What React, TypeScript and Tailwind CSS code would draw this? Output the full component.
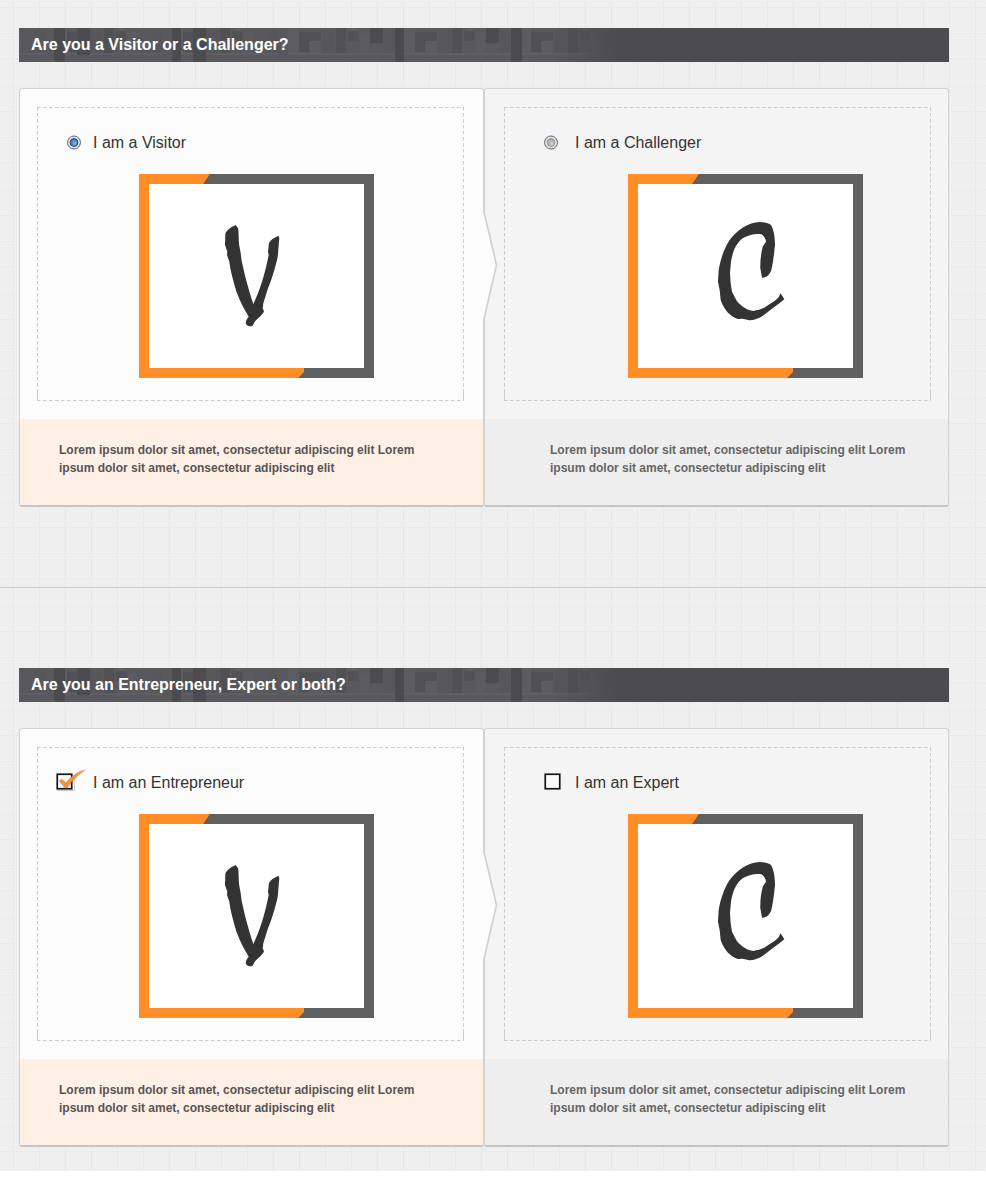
import React from "react";

type Kind = "radio" | "check";

function Texture() {
  return (
    <svg className="absolute inset-0 h-full w-full" aria-hidden="true">
      <defs>
        <pattern id="weave" width="26" height="26" patternUnits="userSpaceOnUse">
          <rect width="26" height="26" fill="#f1f1f1" />
          {Array.from({ length: 13 }, (_, r) =>
            Array.from({ length: 13 }, (_, c) => (
              <rect key={`${r}-${c}`} x={c * 2} y={r * 2 + 1} width="1" height="1" fill="#eaeaea" />
            ))
          )}
          <path d="M13.5 0V26M0 7.5H26" stroke="#eaeaea" strokeWidth="1" />
        </pattern>
      </defs>
      <rect width="100%" height="100%" fill="url(#weave)" />
    </svg>
  );
}

function HeaderPattern({ id }: { id: string }) {
  return (
    <svg className="absolute inset-0" width="930" height="34" aria-hidden="true">
      <defs>
        <pattern id={`${id}-tile`} x="3" width="116" height="34" patternUnits="userSpaceOnUse">
          <rect width="116" height="34" fill="#59595d" />
          <rect x="14" y="2" width="10" height="23" fill="#57575b" />
          <rect x="34" y="0" width="11" height="26" fill="#5d5d61" />
          <rect x="45" y="4" width="10" height="20" fill="#515155" />
          <rect x="55" y="4" width="12" height="9" fill="#525256" />
          <rect x="56" y="13" width="11" height="12" fill="#5d5d61" />
          <rect x="68" y="2" width="12" height="23" fill="#57575b" />
          <rect x="82" y="0" width="10" height="25" fill="#515155" />
          <rect x="94" y="3" width="10" height="10" fill="#525256" />
          <rect x="106" y="5" width="9" height="20" fill="#5c5c60" />
          <rect x="97" y="0" width="6" height="3" fill="#5f5f63" />
          <path d="M0 26H24M34 26H116" stroke="#5f5f63" strokeWidth="2" />
        </pattern>
        <linearGradient id={`${id}-fade`}>
          <stop offset="0" stopColor="#4c4c50" stopOpacity="0" />
          <stop offset="1" stopColor="#4c4c50" />
        </linearGradient>
      </defs>
      <rect width="930" height="34" fill="#4c4c50" />
      <rect width="600" height="34" fill={`url(#${id}-tile)`} />
      <rect x="35" width="11" height="34" fill="#4c4c50" />
      <rect x="58" width="13" height="27" fill="#4c4c50" />
      <rect x="153" width="9" height="34" fill="#4c4c50" />
      <rect x="174" width="13" height="34" fill="#4c4c50" />
      <rect x="351" width="13" height="15" fill="#4c4c50" />
      <rect x="376" width="9" height="34" fill="#4b4b4e" />
      <rect x="467" width="13" height="15" fill="#4c4c50" />
      <rect x="492" width="11" height="34" fill="#4b4b4e" />
      <rect x="530" width="70" height="34" fill={`url(#${id}-fade)`} />
    </svg>
  );
}

function DashedFrame() {
  return (
    <svg className="absolute inset-0" width="427" height="294" aria-hidden="true" fill="none" stroke="#d3cac3">
      <path d="M0 .5H427M0 293.5H427M.5 0V294M426.5 0V294" strokeDasharray="3.6 2.4" />
      <path d="M.5 284V294M426.5 284V294" />
    </svg>
  );
}

function Radio({ on }: { on: boolean }) {
  const id = on ? "radio-on" : "radio-off";
  return (
    <svg width="16" height="16" viewBox="0 0 16 16" aria-hidden="true">
      <defs>
        <radialGradient id={id} cx=".6" cy=".65">
          <stop offset="0" stopColor={on ? "#82b8ed" : "#d2d2d2"} />
          <stop offset="1" stopColor={on ? "#477dc0" : "#aaaaad"} />
        </radialGradient>
      </defs>
      <circle cx="8" cy="7.500" r="6.5" fill="#e3e2e8" stroke="#66666a" />
      <circle cx="8" cy="7.500" r="3.900" fill={`url(#${id})`} stroke={on ? "#2e446b" : "#96969b"} />
    </svg>
  );
}

function Checkbox({ on }: { on: boolean }) {
  return (
    <svg width="32" height="24" viewBox="0 0 32 24" aria-hidden="true">
      {on && <path d="M2 22.500H19.500V7" fill="none" stroke="#c8c8c8" />}
      <rect x="2.250" y="6.250" width="14.500" height="14.500" fill="#fafafa" stroke="#151515" strokeWidth="1.700" />
      {on && (
        <g>
          <path d="M4 13.5L7 12L11 15.5C16 9 22 5 31 2C23 7 17 13 12.5 20.5H10Z" fill="#777" opacity=".55" />
          <path d="M3.8 12.6L7 11L11 14.5C16 8 22 4 31 1C23 6 17 12 12 19.5H9.8C8.5 16 7 14 3.8 12.6Z" fill="#f58f32" />
        </g>
      )}
    </svg>
  );
}

function LetterBox({ letter }: { letter: "V" | "C" }) {
  return (
    <svg width="235" height="204" viewBox="0 0 235 204" role="img" aria-label={letter}>
      <path fill="#606060" d="M0 0H235V204H0Z" />
      <path fill="#ff8d28" d="M0 0H71L64 10H10V194H165V198L159 204H0Z" />
      <path fill="#fff" d="M10 10H225V194H10Z" />
      {letter === "V" ? (
        <path
          transform="translate(61 36) scale(.33333)"
          fill="#333"
          d="M76 72C80 60 92 52 107 45L114 55C117 66 115 85 118 108L122 130L125 152C133 190 143 230 160 282C180 240 192 200 203 150L206 135L204 125L207 98C214 87 224 83 235 77L238 85L235 118L233 142C225 175 215 210 204 235L190 280L188 295L192 304C186 318 172 325 163 337L158 347C150 351 140 349 137 340L139 330L146 320C134 300 120 275 110 247C102 222 95 195 91 175L88 155L81 135L82 125L75 105Z"
        />
      ) : (
        <path
          transform="translate(72 36) scale(.33333)"
          fill="#333"
          d="M186 203L181 175C180 150 184 125 189 108L198 95C197 85 192 78 184 73C165 70 145 75 128 85C108 100 98 125 93 155L90 190L92 220L96 245L110 272C125 290 142 300 160 303C180 300 195 294 208 283C225 273 235 265 238 258L242 250L253 268C235 283 215 297 197 311C182 323 165 330 148 331L128 326L113 327C90 318 72 300 62 270L59 240L54 215L56 180C62 145 73 115 87 93C110 60 145 37 180 36C195 37 208 39 213 45C222 60 225 85 225 105C222 135 218 165 214 180C208 195 202 202 186 203Z"
        />
      )}
    </svg>
  );
}

function Choice({ kind, selected, label, letter }: { kind: Kind; selected: boolean; label: string; letter: "V" | "C" }) {
  return (
    <div
      className={
        selected
          ? "flex w-[465px] flex-col overflow-hidden rounded-[3px] border border-b-2 border-[#d2d2d2] border-b-[#c4c6c8] bg-[#fcfcfc]"
          : "flex w-[465px] flex-col overflow-hidden rounded-[3px] border border-b-2 border-[#d2d2d2] border-b-[#c4c4c4] bg-[#f4f4f4]"
      }
    >
      <div className={selected ? "h-[330px] pt-[18px] pl-[17px]" : "h-[330px] pt-[18px] pl-[19px]"}>
        <div className="relative h-[294px] w-[427px]">
          <DashedFrame />
          <div className={selected ? "relative flex h-[67px] items-center pt-1 pl-[17px]" : "relative flex h-[67px] items-center pt-1 pl-[38px]"}>
            <span className={selected ? "flex w-[39px] items-center" : "flex w-[33px] items-center"}>
              {kind === "radio" ? (
                <span className={selected ? "pl-[12px]" : "pl-px"}>
                  <Radio on={selected} />
                </span>
              ) : (
                <span className="pb-[5px] pl-px">
                  <Checkbox on={selected} />
                </span>
              )}
            </span>
            <span className="text-[16px] leading-5 whitespace-nowrap text-[#333]">{label}</span>
          </div>
          <div className={selected ? "relative pl-[102px]" : "relative pl-[124px]"}>
            <LetterBox letter={letter} />
          </div>
        </div>
      </div>
      <div
        className={
          selected
            ? "flex-1 bg-[#fff0e5] pt-[22px] pl-[39px] text-[12px] leading-[18px] font-bold text-[#555]"
            : "flex-1 bg-[#eeeeee] pt-[22px] pl-[65px] text-[12px] leading-[18px] font-bold text-[#666]"
        }
      >
        Lorem ipsum dolor sit amet, consectetur adipiscing elit Lorem
        <br />
        ipsum dolor sit amet, consectetur adipiscing elit
      </div>
    </div>
  );
}

function Question({ id, title, kind, first, second }: { id: string; title: string; kind: Kind; first: string; second: string }) {
  return (
    <section className="w-[930px]">
      <h2 className="relative flex h-[34px] items-center pl-3 text-[16px] font-bold text-white">
        <HeaderPattern id={id} />
        <span className="relative">{title}</span>
      </h2>
      <div className="relative mt-[26px] flex h-[419px]">
        <Choice kind={kind} selected label={first} letter="V" />
        <Choice kind={kind} selected={false} label={second} letter="C" />
        <svg className="absolute top-[123px] left-[463px]" width="18" height="110" aria-hidden="true">
          <path d="M0 1H2L14.500 54L2 108H0Z" fill="#fcfcfc" />
          <path d="M2 0V1L14.500 54L2 108V110" fill="none" stroke="#d2d0d2" strokeWidth="1.700" />
        </svg>
      </div>
    </section>
  );
}

export default function App() {
  return (
    <div className="min-h-[1200px] bg-white font-['Liberation_Sans',Arial,sans-serif]">
      <main className="relative h-[1171px] w-full overflow-hidden">
        <Texture />
        <div className="relative">
          <div className="h-[588px] border-b border-[#c9c9c9] pt-7 pl-[19px]">
            <Question id="visitor" title="Are you a Visitor or a Challenger?" kind="radio" first="I am a Visitor" second="I am a Challenger" />
          </div>
          <div className="pt-20 pl-[19px]">
            <Question id="expert" title="Are you an Entrepreneur, Expert or both?" kind="check" first="I am an Entrepreneur" second="I am an Expert" />
          </div>
        </div>
      </main>
    </div>
  );
}
